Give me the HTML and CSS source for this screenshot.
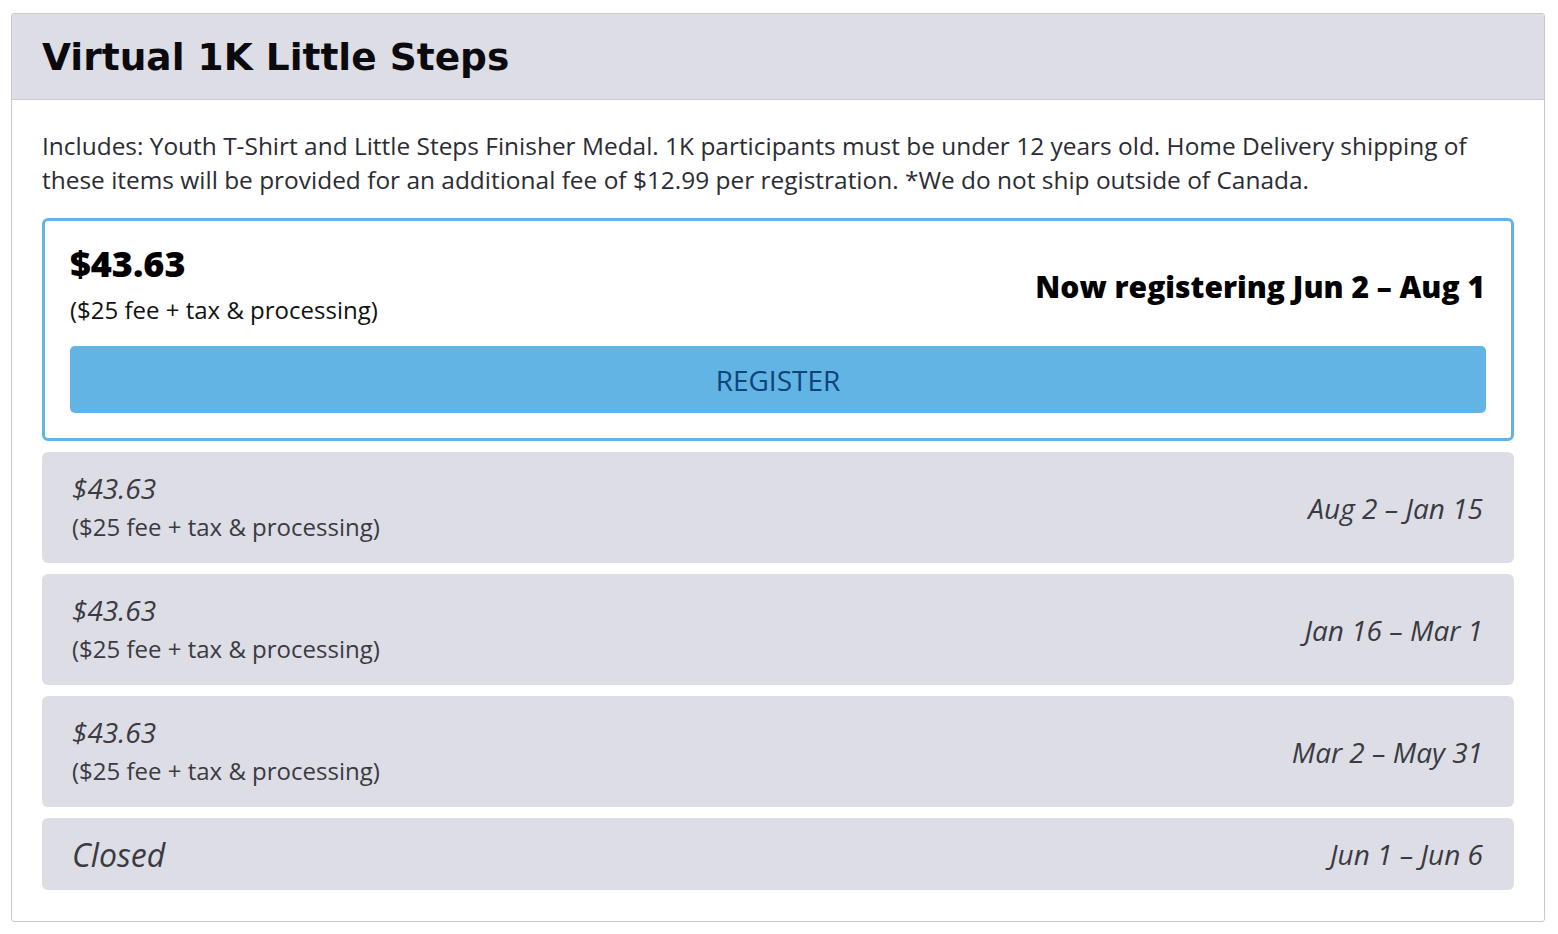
FILE: index.html
```html
<!DOCTYPE html>
<html lang="en">
<head>
<meta charset="utf-8">
<title>Virtual 1K Little Steps</title>
<link rel="stylesheet" href="styles.css">
</head>
<body>
<section class="panel">
  <header class="panel-head">
    <h1 class="title">Virtual 1K Little Steps</h1>
  </header>
  <div class="panel-body">
    <p class="desc">Includes: Youth T-Shirt and Little Steps Finisher Medal. 1K participants must be under 12 years old. Home Delivery shipping of these items will be provided for an additional fee of $12.99 per registration. *We do not ship outside of Canada.</p>
    <div class="tier active">
      <div class="tier-top">
        <div class="price-block">
          <div class="price">$43.63</div>
          <div class="fee">($25 fee + tax &amp; processing)</div>
        </div>
        <div class="now">Now registering Jun 2 – Aug 1</div>
      </div>
      <button class="register">REGISTER</button>
    </div>
    <div class="tier muted">
      <div class="price-block">
        <div class="price">$43.63</div>
        <div class="fee">($25 fee + tax &amp; processing)</div>
      </div>
      <div class="dates">Aug 2 – Jan 15</div>
    </div>
    <div class="tier muted">
      <div class="price-block">
        <div class="price">$43.63</div>
        <div class="fee">($25 fee + tax &amp; processing)</div>
      </div>
      <div class="dates">Jan 16 – Mar 1</div>
    </div>
    <div class="tier muted">
      <div class="price-block">
        <div class="price">$43.63</div>
        <div class="fee">($25 fee + tax &amp; processing)</div>
      </div>
      <div class="dates">Mar 2 – May 31</div>
    </div>
    <div class="tier muted closed">
      <div class="closed-label">Closed</div>
      <div class="dates">Jun 1 – Jun 6</div>
    </div>
  </div>
</section>
</body>
</html>
```

FILE: styles.css
```css
* { box-sizing: border-box; }
html, body { margin: 0; padding: 0; background: #fff; }
body {
  font-family: "Open Sans", "Liberation Sans", sans-serif;
  color: #2f2f37;
  padding: 13px 13px 0 11px;
}
.panel {
  border: 1px solid #c9c9cc;
  border-radius: 3px;
  overflow: hidden;
  height: 909px;
}
.panel-head {
  background: #dddde5;
  border-bottom: 1px solid #c9c9cc;
  height: 86px;
  padding: 0 30px;
  display: flex;
  align-items: center;
}
.title {
  margin: 0;
  font-family: "DejaVu Sans", "Liberation Sans", sans-serif;
  font-weight: 700;
  font-size: 37.5px;
  color: #0b0b0f;
  padding-top: 1px;
}
.panel-body {
  padding: 29px 30px 0 30px;
}
.desc {
  margin: 0 0 21px 0;
  font-size: 24.45px;
  line-height: 34px;
  color: #2b2b33;
}
.tier {
  border-radius: 6px;
  margin-bottom: 11px;
}
.active {
  border: 3px solid #62b4e4;
  padding: 20px 25px 25px 25px;
}
.tier-top {
  display: flex;
  justify-content: space-between;
  align-items: center;
}
.active .price {
  font-size: 36px;
  font-weight: 800;
  color: #000;
  line-height: 46px;
}
.active .fee {
  font-size: 24px;
  color: #111;
  line-height: 34px;
  margin-top: 6px;
}
.now {
  font-size: 30px;
  font-weight: 800;
  color: #000;
  margin-right: 1px;
  padding-top: 4px;
}
.register {
  display: block;
  width: 100%;
  margin-top: 19px;
  height: 67px;
  border: none;
  border-radius: 5px;
  background: #62b4e4;
  color: #0d4577;
  font-family: "Open Sans", "Liberation Sans", sans-serif;
  font-size: 28px;
  font-weight: 500;
  padding: 0;
}
.muted {
  background: #dddde6;
  display: flex;
  justify-content: space-between;
  align-items: center;
  padding: 16px 31px 16px 30px;
  height: 111px;
  color: #3a3a42;
  font-style: italic;
}
.muted .price {
  font-size: 28px;
  line-height: 38px;
}
.muted .fee {
  font-style: normal;
  font-size: 24px;
  line-height: 40px;
}
.dates {
  font-size: 28px;
}
.closed {
  height: 72px;
  padding-top: 0;
  padding-bottom: 0;
}
.closed-label {
  font-size: 32px;
}
```
